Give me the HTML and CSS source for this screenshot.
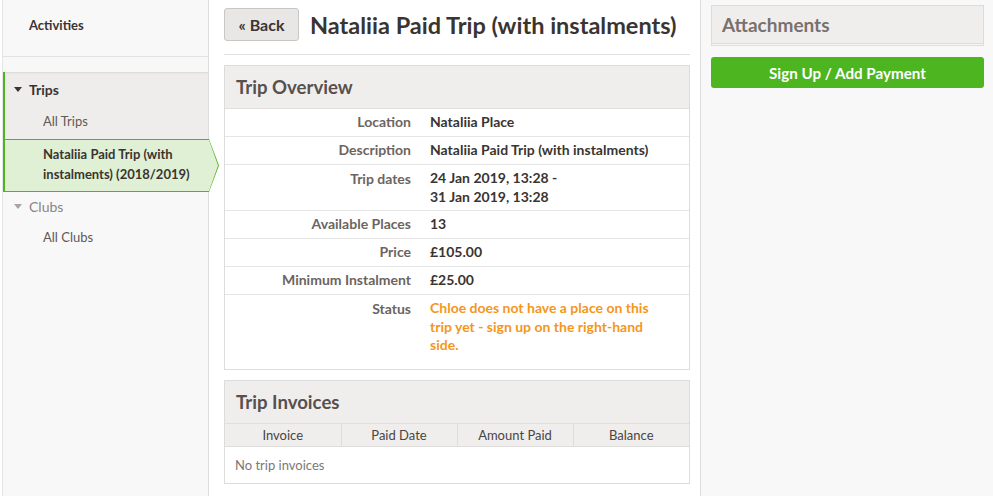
FILE: index.html
```html
<!DOCTYPE html>
<html>
<head>
<meta charset="utf-8">
<link rel="stylesheet" href="styles.css">
</head>
<body>
<aside class="sidebar">
  <div class="side-title">Activities</div>
  <div class="side-gap"></div>
  <div class="group open">
    <div class="group-head"><span class="tri"></span>Trips</div>
    <div class="item">All Trips</div>
    <div class="item active">Nataliia Paid Trip (with instalments) (2018/2019)</div>
  </div>
  <div class="group">
    <div class="group-head muted"><span class="tri light"></span>Clubs</div>
    <div class="item">All Clubs</div>
  </div>
</aside>
<main class="main">
  <div class="page-head">
    <button class="back">« Back</button>
    <h1 class="title">Nataliia Paid Trip (with instalments)</h1>
  </div>
  <section class="panel">
    <h2 class="panel-head">Trip Overview</h2>
    <table class="details">
      <tr><th>Location</th><td>Nataliia Place</td></tr>
      <tr><th>Description</th><td>Nataliia Paid Trip (with instalments)</td></tr>
      <tr class="dates-row"><th>Trip dates</th><td>24 Jan 2019, 13:28 -<br>31 Jan 2019, 13:28</td></tr>
      <tr><th>Available Places</th><td>13</td></tr>
      <tr><th>Price</th><td>£105.00</td></tr>
      <tr><th>Minimum Instalment</th><td>£25.00</td></tr>
      <tr class="status-row"><th>Status</th><td><span class="status">Chloe does not have a place on this trip yet - sign up on the right-hand side.</span></td></tr>
    </table>
  </section>
  <section class="panel">
    <h2 class="panel-head">Trip Invoices</h2>
    <table class="invoices">
      <thead><tr><th>Invoice</th><th>Paid Date</th><th>Amount Paid</th><th>Balance</th></tr></thead>
      <tbody><tr><td colspan="4" class="empty">No trip invoices</td></tr></tbody>
    </table>
  </section>
</main>
<aside class="rightcol">
  <section class="panel attach">
    <h2 class="panel-head light">Attachments</h2>
  </section>
  <button class="signup">Sign Up / Add Payment</button>
</aside>
</body>
</html>
```
FILE: styles.css
```css
* { box-sizing: border-box; }
html, body { margin: 0; padding: 0; }
body {
  display: flex;
  height: 496px;
  overflow: hidden;
  font-family: Lato, "Open Sans", sans-serif;
  font-size: 14px;
  color: #3a3431;
  background: #fff;
}
.sidebar {
  margin-left: 2px;
  width: 207px;
  flex: none;
  background: #f8f8f8;
  border-left: 1px solid #e6e6e6;
  border-right: 1px solid #dcdcdc;
  font-size: 13px;
}
.side-title {
  height: 57px;
  padding: 17px 0 0 26px;
  font-weight: bold;
  color: #3a3431;
  border-bottom: 1px solid #e2e2e2;
}
.side-gap { height: 15px; }
.group.open {
  background: #efedec;
  border-left: 2px solid #4db522;
  box-shadow: inset 0 2px 2px -1px #d8d6d5;
}
.group-head {
  height: 35px;
  display: flex;
  align-items: center;
  padding-left: 9px;
  font-weight: bold;
  font-size: 14px;
  color: #3a3431;
}
.group:not(.open) .group-head { padding-left: 11px; height: 28px; font-weight: normal; color: #8a8583; }
.tri {
  width: 0; height: 0;
  border-left: 4px solid transparent;
  border-right: 4px solid transparent;
  border-top: 5px solid #3a3431;
  margin-right: 7px;
}
.tri.light { border-top-color: #a8a4a2; }
.item {
  padding: 7px 10px 10px 38px;
  color: #5f5956;
  line-height: 15px;
}
.group:not(.open) .item { padding: 10px 10px 8px 40px; }
.item.active {
  position: relative;
  background: #dff0d4;
  border-top: 1px solid #4db522;
  border-bottom: 1px solid #4db522;
  font-weight: bold;
  color: #3a3431;
  line-height: 20px;
  padding: 4px 10px 7px 38px;
  margin-right: -1px;
}
.item.active::after {
  content: "";
  position: absolute;
  top: -1px;
  right: -10px;
  width: 10px;
  height: calc(100% + 2px);
  background: #4db522;
  clip-path: polygon(0 0, 100% 50%, 0 100%);
}
.item.active::before {
  content: "";
  position: absolute;
  top: 0;
  right: -9px;
  width: 9px;
  height: 100%;
  background: #dff0d4;
  clip-path: polygon(0 0, 100% 50%, 0 100%);
  z-index: 1;
}
.main {
  width: 491px;
  flex: none;
  padding: 8px 10px 0 15px;
}
.page-head {
  display: flex;
  align-items: center;
  height: 47px;
  padding-bottom: 13px;
  border-bottom: 1px solid #e0e0e0;
  margin-bottom: 10px;
}
.back {
  height: 33px;
  width: 75px;
  margin: 0;
  font-family: inherit;
  font-size: 16px;
  font-weight: bold;
  color: #3a3431;
  background: #e9e7e6;
  border: 1px solid #c9c7c6;
  border-radius: 3px;
  padding: 0;
}
.title {
  margin: 0 0 0 11px;
  font-size: 23.5px;
  font-weight: bold;
  color: #3a3431;
  white-space: nowrap;
}
.panel {
  border: 1px solid #dcdcdc;
  margin-bottom: 10px;
}
.panel-head {
  margin: 0;
  background: #efeeed;
  height: 43px;
  display: flex;
  align-items: center;
  padding-left: 11px;
  font-size: 18.6px;
  font-weight: bold;
  color: #57504d;
  border-bottom: 1px solid #e0dfde;
}
.details { width: 100%; border-collapse: collapse; }
.details th, .details td {
  text-align: left;
  vertical-align: top;
  padding: 5px 10px 6px;
  line-height: 16px;
  border-top: 1px solid #e5e5e5;
}
.details tr:first-child th, .details tr:first-child td { border-top: 0; }
.details th {
  width: 195px;
  text-align: right;
  color: #6c6461;
  font-weight: bold;
  padding-right: 9px;
  padding-left: 0;
}
.details td {
  font-weight: bold;
  color: #3a3431;
  padding-left: 10px;
}
.dates-row th, .dates-row td { line-height: 19px; padding-top: 3px; padding-bottom: 4px; }
.dates-row th { padding-top: 4px; }
.status-row th, .status-row td { height: 74px; padding-top: 4px; }
.status-row th { padding-top: 6px; }
.status { display: block; width: 230px; color: #f5961c; line-height: 18.5px; }
.invoices { width: 100%; border-collapse: collapse; table-layout: fixed; font-size: 13px; }
.invoices th {
  background: #efeeed;
  font-weight: normal;
  color: #4a4442;
  height: 23px;
  padding: 0;
  border-left: 1px solid #dedddc;
  border-bottom: 1px solid #dedddc;
}
.invoices th:first-child { border-left: 0; }
.empty {
  height: 36px;
  padding: 0 10px;
  color: #7d7875;
}
.rightcol {
  flex: 1;
  background: #f8f8f8;
  border-left: 1px solid #dedede;
  padding: 5px 9px 0 10px;
}
.attach {
  margin-bottom: 11px;
  padding-bottom: 1px;
}
.panel-head.light {
  height: 38px;
  font-size: 19px;
  color: #7a716e;
  border-bottom: 1px solid #dcdcdc;
  padding-left: 10px;
}
.signup {
  width: 100%;
  height: 31px;
  margin: 0;
  background: #4db520;
  color: #fff;
  border: 0;
  border-radius: 3px;
  font-family: inherit;
  font-size: 15.2px;
  font-weight: bold;
}
```
